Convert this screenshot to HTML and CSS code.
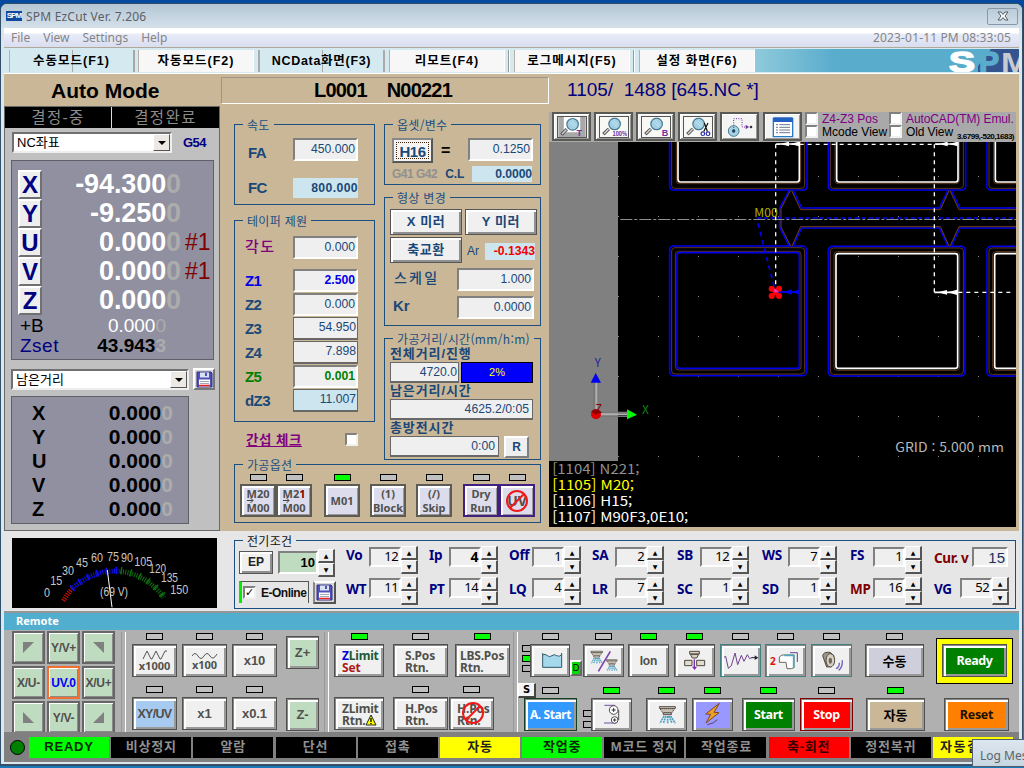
FILE: index.html
```html
<!DOCTYPE html>
<html lang="ko">
<head>
<meta charset="utf-8">
<title>SPM EzCut Ver. 7.206</title>
<link rel="stylesheet" href="styles.css">
</head>
<body>
<svg class="defs" width="0" height="0">
  <defs>
    <symbol id="floppy" viewBox="0 0 17 17"><path d="M1 1h14l1 1v14H1z" fill="#5050b8" stroke="#303080"/><path d="M4 1.5h9v5H4z" fill="#d8e4f4"/><path d="M9 2h2v3H9z" fill="#5050b8"/><path d="M3 8.500h11v7H3z" fill="#fff"/><path d="M4 10.500h9M4 12.500h9" stroke="#a0a8b8"/><path d="M3 14.500h11" stroke="#f02020" stroke-width="1.500"/></symbol>
    <symbol id="lens" viewBox="0 0 84 60"><path d="M6 56L24 38" stroke="#505050" stroke-width="11"/><path d="M8 54L23 39" stroke="#d0d0d0" stroke-width="5"/><circle cx="43" cy="22" r="19" fill="#a4d0e4" stroke="#487890" stroke-width="4"/><path d="M33 14l18 18M39 10l16 16" stroke="#c8e8f4" stroke-width="3"/></symbol>
    <symbol id="forbid" viewBox="0 0 24 24"><circle cx="12" cy="12" r="10" fill="none" stroke="#f01818" stroke-width="2"/><path d="M5 19L19 5" stroke="#f01818" stroke-width="2"/></symbol>
    <symbol id="spray" viewBox="0 0 52 54"><path d="M2 2h48v5H2z" fill="#e8e0d0" stroke="#504840" stroke-width="3"/><path d="M4 8h44l-8 12H12z" fill="#c8c0b0" stroke="#504840" stroke-width="3" stroke-dasharray="4 2"/><path d="M14 21h24v5H14z" fill="#fff" stroke="#504840" stroke-width="3"/><path d="M16 30L4 52M22 30l-8 22M27 30v22M31 30l9 22M36 30l14 22" stroke="#50a0c0" stroke-width="5" stroke-dasharray="6 2"/></symbol>
  </defs>
</svg>
<div class="desktop">
<div class="window">
  <header class="titlebar">
    <span class="appicon">SPM</span><span class="title">SPM EzCut Ver. 7.206</span>
    <span class="close"><svg width="12" height="10" viewBox="0 0 12 10"><path d="M1 1h3l2 2.500L8 1h3L8 5l3 4H8L6 6.500 4 9H1l3-4z" fill="#fff" stroke="#505866"/></svg></span>
  </header>
  <nav class="menubar"><span>File</span><span>View</span><span>Settings</span><span>Help</span><time>2023-01-11 PM 08:33:05</time></nav>
  <nav class="tabs">
    <span class="tab cyan t1">수동모드(F1)</span><span class="tab">자동모드(F2)</span><span class="tab cyan t3">NCData화면(F3)</span><span class="tab">리모트(F4)</span><span class="sep"></span><span class="tab">로그메시지(F5)</span><span class="sep"></span><span class="tab">설정 화면(F6)</span>
    <span class="brand"><svg width="70" height="25" viewBox="0 0 70 25"><path d="M42 0h28v25H29V17z" fill="#34548f"/><text x="0" y="23" class="logo" textLength="26" lengthAdjust="spacingAndGlyphs" fill="#fff" stroke="#fff">S</text><text x="30" y="23" class="logo" textLength="20" lengthAdjust="spacingAndGlyphs" fill="#5aaccd" stroke="#5aaccd">P</text><text x="52" y="24" class="logo thin" textLength="28" lengthAdjust="spacingAndGlyphs" fill="#c8ccd2">M</text></svg></span>
  </nav>

  <main class="main">
    <section class="left">
      <h1>Auto Mode</h1>
      <div class="axes">
        <div class="decide"><span>결정-중</span><span>결정완료</span></div>
        <div class="selrow"><span class="select s1">NC좌표<i></i></span><b class="g54">G54</b></div>
        <div class="coords">
          <div class="axis"><b class="axbtn">X</b><b class="num">-94.300<i>0</i></b></div>
          <div class="axis"><b class="axbtn">Y</b><b class="num">-9.250<i>0</i></b></div>
          <div class="axis"><b class="axbtn">U</b><b class="num">0.000<i>0</i></b><em>#1</em></div>
          <div class="axis"><b class="axbtn">V</b><b class="num">0.000<i>0</i></b><em>#1</em></div>
          <div class="axis"><b class="axbtn">Z</b><b class="num">0.000<i>0</i></b></div>
          <div class="minor"><span>+B</span><span class="num2 white">0.000<i>0</i></span></div>
          <div class="minor zs"><span>Zset</span><b class="num2">43.943<i>3</i></b></div>
        </div>
        <div class="selrow two"><span class="select s2">남은거리<i></i></span><span class="save"><svg width="17" height="17"><use href="#floppy"/></svg></span></div>
        <div class="remain">
          <div><b>X</b><b class="rv">0.000<i>0</i></b></div>
          <div><b>Y</b><b class="rv">0.000<i>0</i></b></div>
          <div><b>U</b><b class="rv">0.000<i>0</i></b></div>
          <div><b>V</b><b class="rv">0.000<i>0</i></b></div>
          <div><b>Z</b><b class="rv">0.000<i>0</i></b></div>
        </div>
      </div>
    </section>

    <section class="middle">
      <div class="prog"><b>L0001</b><b>N00221</b></div>
      <div class="cols">
        <div class="colA">
          <div class="group speed"><span class="cap">속도</span>
            <div class="fr fa"><b>FA</b><span class="in">450.000</span></div>
            <div class="fr fc"><b>FC</b><span class="in ro">800.000</span></div>
          </div>
          <div class="group taper"><span class="cap">테이퍼 제원</span>
            <div class="fr ang"><b class="kr purple">각도</b><span class="in">0.000</span></div>
            <div class="fr"><b class="blue">Z1</b><span class="in blue bold">2.500</span></div>
            <div class="fr"><b>Z2</b><span class="in">0.000</span></div>
            <div class="fr"><b>Z3</b><span class="in flat">54.950</span></div>
            <div class="fr"><b>Z4</b><span class="in flat">7.898</span></div>
            <div class="fr"><b class="green">Z5</b><span class="in green bold">0.001</span></div>
            <div class="fr"><b>dZ3</b><span class="in flat cy">11.007</span></div>
          </div>
          <div class="interf"><b>간섭 체크</b><i class="chk"></i></div>
        </div>
        <div class="colB">
          <div class="group offset"><span class="cap">옵셋/변수</span>
            <div class="orow"><span class="h16"><b>H16</b></span><b class="eq">=</b><span class="in">0.1250</span></div>
            <div class="orow2"><b class="grey">G41 G42</b><b>C.L</b><span class="in ro">0.0000</span></div>
          </div>
          <div class="group shape"><span class="cap">형상 변경</span>
            <div class="sr"><span class="btn">X 미러</span><span class="btn">Y 미러</span></div>
            <div class="sr"><span class="btn">축교환</span><span class="ar">Ar</span><span class="in ro red">-0.1343</span></div>
            <div class="sr2"><b class="kr">스케일</b><span class="in">1.000</span></div>
            <div class="sr2 kr2"><b>Kr</b><span class="in">0.0000</span></div>
          </div>
          <div class="group dist"><span class="cap">가공거리/시간(mm/h:m)</span>
            <b class="dl">전체거리/진행</b>
            <div class="dr"><span class="in flat w69">4720.0</span><span class="pct">2%</span></div>
            <b class="dl">남은거리/시간</b>
            <div class="dr"><span class="in flat w143">4625.2/0:05</span></div>
            <b class="dl">총방전시간</b>
            <div class="dr"><span class="in flat w109">0:00</span><span class="rbtn">R</span></div>
          </div>
        </div>
      </div>
      <div class="group opts"><span class="cap">가공옵션</span>
        <div class="op"><i class="led"></i><div class="ob"><p>M20</p><svg class="arr" width="7" height="5"><path d="M0 2.500h6M3.500 0L6 2.500 3.500 5" fill="none" stroke="#444"/></svg><p>M00</p></div></div>
        <div class="op"><i class="led"></i><div class="ob"><p>M2<em>1</em></p><svg class="arr" width="7" height="5"><path d="M0 2.500h6M3.500 0L6 2.500 3.500 5" fill="none" stroke="#444"/></svg><p>M00</p></div></div>
        <div class="op g12"><i class="led on"></i><div class="ob"><p>M01</p></div></div>
        <div class="op g10"><i class="led"></i><div class="ob"><p>(1)</p><p>Block</p></div></div>
        <div class="op g10"><i class="led"></i><div class="ob"><p>(/)</p><p>Skip</p></div></div>
        <div class="op g11 violet"><i class="led"></i><div class="ob"><p>Dry</p><p>Run</p></div></div>
        <div class="op violet"><i class="led"></i><div class="ob"><p class="uv">UV</p><svg class="ban" width="24" height="24"><use href="#forbid"/></svg></div></div>
      </div>
    </section>

    <section class="right">
      <div class="ncline">1105/&nbsp; 1488 [645.NC *]</div>
      <div class="tools">
        <span class="tool"><svg width="30" height="22" viewBox="0 0 90 66"><path d="M0 0h90v66H0z" fill="#a8a8a8"/><path d="M18 0h54v50H18z" fill="#fff"/><use href="#lens" x="4" y="2" width="84" height="60"/><text x="60" y="63" class="tl">T</text></svg></span>
        <span class="tool"><svg width="30" height="22" viewBox="0 0 90 66"><use href="#lens" x="4" y="1" width="84" height="60"/><text x="40" y="64" class="tl sm" textLength="48" lengthAdjust="spacingAndGlyphs">100%</text></svg></span>
        <span class="tool"><svg width="30" height="22" viewBox="0 0 90 66"><use href="#lens" x="4" y="1" width="84" height="60"/><text x="64" y="64" class="tl">B</text></svg></span>
        <span class="tool"><svg width="30" height="22" viewBox="0 0 90 66"><use href="#lens" x="4" y="1" width="84" height="60"/><path d="M66 20l10 28M78 20L64 48" stroke="#111" stroke-width="4"/><g fill="none" stroke="#3030b0" stroke-width="4"><circle cx="61" cy="55" r="6"/><circle cx="78" cy="55" r="6"/></g></svg></span>
        <span class="tool plain"><svg width="30" height="24" viewBox="0 0 90 72"><circle cx="26" cy="48" r="16" fill="#a4d4e4" stroke="#487890" stroke-width="3"/><circle cx="26" cy="48" r="5" fill="#204060"/><path d="M26 46V11H51V36H64" fill="none" stroke="#7030a0" stroke-width="3" stroke-dasharray="3 4"/><path d="M62 29l10 7-10 7z" fill="#7030a0"/><circle cx="78" cy="36" r="4" fill="#333"/></svg></span>
        <span class="tool plain"><svg width="22" height="22" viewBox="0 0 66 66"><path d="M4 8h58v54H4z" fill="#fff" stroke="#2878c8" stroke-width="4"/><path d="M4 4h58v14H4z" fill="#2060c0"/><path d="M12 26h6M12 34h6M12 42h6M12 50h6M22 26h32M22 34h32M22 42h32M22 50h32" stroke="#6a7a90" stroke-width="3"/></svg></span>
        <div class="checks"><label><i class="chk"></i>Z4-Z3 Pos</label><label class="k"><i class="chk"></i>Mcode View</label></div>
        <div class="checks c2"><label><i class="chk"></i>AutoCAD(TM) Emul.</label><label class="k"><i class="chk"></i>Old View<small>3.6799,-520,1683)</small></label></div>
      </div>
      <svg class="cad" width="467" height="385" viewBox="12 6 1401 1155">
        <defs>
          <pattern id="dots" x="219" y="108" width="120" height="120" patternUnits="userSpaceOnUse"><path d="M0 0h3v3H0z" fill="#8a8a8a"/></pattern>
          <g id="lower"><rect x="374" y="318" width="410" height="389" rx="12" fill="none" stroke="#0000f0" stroke-width="5"/><rect x="380" y="323" width="399" height="379" rx="10" fill="none" stroke="#603818" stroke-width="3"/><rect x="391" y="334" width="377" height="356" rx="10" fill="none" stroke="#603818" stroke-width="3"/></g>
          <g id="upper" fill="none"><path d="M374 0V138q0 12 12 12H774q12 0 12-12V0" stroke="#0000f0" stroke-width="5"/><path d="M380 0V136q0 9 9 9H770q9 0 9-9V0M394 0V122q0 9 9 9H757q10 0 10-9V0" stroke="#603818" stroke-width="3"/><path d="M399 0V118q0 8 7 8H756q7 0 7-8V0" stroke="#fff" stroke-width="5"/></g>
        </defs>
        <path d="M12 6h1401v1155H12z" fill="#000"/><path d="M219 100h1194v860H219z" fill="url(#dots)"/><path d="M12 6h207v957H12z" fill="#808080"/>
        <use href="#upper"/><use href="#upper" x="476"/><use href="#upper" x="952"/>
        <use href="#lower"/><use href="#lower" x="476" y="1"/><use href="#lower" x="952" y="1"/>
        <rect x="396" y="338" width="367" height="347" rx="8" fill="none" stroke="#0000f0" stroke-width="5"/>
        <g fill="none" stroke="#fff" stroke-width="5"><rect x="873" y="341" width="365" height="344" rx="7"/><rect x="1349" y="341" width="365" height="344" rx="7"/></g>
        <path d="M732 152L704 205V262L733 318M744 152L770 204H1183L1209 152M1219 152L1245 204H1413M744 318L770 264H1183L1209 318M1219 318L1245 264H1413" fill="none" stroke="#0000f0" stroke-width="5"/>
        <path d="M736 152L708 206V261L737 318M740 152L767 209H1186L1212 152M1215 152L1242 209H1413M741 318L767 260H1186L1212 318M1215 318L1242 260H1413" fill="none" stroke="#704018" stroke-width="3"/>
        <path d="M226 238.500H1413" stroke="#909090" stroke-width="3" stroke-dasharray="36 6 9 6"/>
        <path d="M635 234H1413" stroke="#0000f0" stroke-width="4" stroke-dasharray="13 8"/>
        <path d="M639 250L688 443" stroke="#0000f0" stroke-width="5" stroke-dasharray="14 12"/>
        <path d="M692 13V445M692 13H1240M1168 13V457M1240 457H1405" fill="none" stroke="#fff" stroke-width="4" stroke-dasharray="12 12"/>
        <path d="M694 12H762M1170 12H1238M1168 457H1238" stroke="#fff" stroke-width="5"/>
        <path d="M706 12l26-7v14zM736 12l26-7v14zM1182 12l26-7v14zM1212 12l26-7v14zM1178 457l28-7v14zM1208 457l28-8v16z" fill="#fff"/>
        <path d="M694 456H764" stroke="#0000f0" stroke-width="5"/><path d="M716 456l24-8v16zM742 456l22-8v16z" fill="#0000f0"/>
        <text x="628" y="232" font-size="34" fill="#b4b400" textLength="70" lengthAdjust="spacingAndGlyphs">M00</text>
        <path d="M682 448l18 18M700 448l-18 18" stroke="#f00" stroke-width="10"/><g fill="#f00"><circle cx="680" cy="446" r="9"/><circle cx="702" cy="446" r="9"/><circle cx="680" cy="468" r="9"/><circle cx="702" cy="468" r="9"/></g><path d="M688 444l14 13h-14z" fill="#f030e0"/>
        <path d="M152 728V820" stroke="#777" stroke-width="15"/><path d="M154 728V820M165 823H246" stroke="#b0b0b0" stroke-width="6"/><path d="M165 829H246" stroke="#777" stroke-width="4"/><path d="M165 817H246" stroke="#777" stroke-width="4"/>
        <path d="M137 728h31l-16-29z" fill="#0000f0"/><path d="M246 808v30l30-14z" fill="#0f0"/><circle cx="153" cy="823" r="15" fill="#e00000"/><path d="M138 815q15-14 30 0l-15 9z" fill="#900000"/>
        <text x="149" y="681" font-size="34" fill="#2020a0">Y</text><text x="151" y="820" font-size="34" fill="#800000">Z</text><text x="291" y="823" font-size="36" fill="#108010">X</text>
        <text x="1051" y="935" font-size="38" fill="#b8b8b8" textLength="326" lengthAdjust="spacingAndGlyphs">GRID : 5.000 mm</text>
        <g font-size="41" fill="#fff"><text x="22" y="1001" fill="#909090" textLength="261" lengthAdjust="spacingAndGlyphs">[1104] N221;</text><text x="22" y="1049" fill="#ff0" textLength="245" lengthAdjust="spacingAndGlyphs">[1105] M20;</text><text x="22" y="1097" textLength="240" lengthAdjust="spacingAndGlyphs">[1106] H15;</text><text x="22" y="1145" textLength="408" lengthAdjust="spacingAndGlyphs">[1107] M90F3,0E10;</text></g>
      </svg>
    </section>
  </main>

  <section class="elec">
    <svg class="gauge" width="205" height="70" viewBox="36 24 615 210">
      <path d="M36 24h615v210H36z" fill="#000"/>
      <g fill="none" stroke-width="15"><path d="M190 212A184 184 0 0 1 216 177" stroke="#e01010" stroke-dasharray="3 4"/><path d="M216 177A184 184 0 0 1 362 124" stroke="#1010f0" stroke-dasharray="3 4"/><path d="M362 124A184 184 0 0 1 491 203" stroke="#107010" stroke-dasharray="3 4"/></g>
      <g fill="none" stroke-width="22"><path d="M216 176A186 186 0 0 1 362 122" stroke="#1010f0" stroke-dasharray="4 25"/><path d="M362 122A186 186 0 0 1 491 200" stroke="#107010" stroke-dasharray="4 25"/></g>
      <path d="M322 120L336 232" stroke="#fff" stroke-width="3"/>
      <g fill="#c8c8c8" font-size="38"><text x="132" y="201" textLength="18" lengthAdjust="spacingAndGlyphs">0</text><text x="151" y="166" textLength="36" lengthAdjust="spacingAndGlyphs">15</text><text x="186" y="136" textLength="36" lengthAdjust="spacingAndGlyphs">30</text><text x="228" y="111" textLength="36" lengthAdjust="spacingAndGlyphs">45</text><text x="273" y="97" textLength="36" lengthAdjust="spacingAndGlyphs">60</text><text x="321" y="94" textLength="36" lengthAdjust="spacingAndGlyphs">75</text><text x="363" y="97" textLength="36" lengthAdjust="spacingAndGlyphs">90</text><text x="403" y="109" textLength="54" lengthAdjust="spacingAndGlyphs">105</text><text x="448" y="129" textLength="50" lengthAdjust="spacingAndGlyphs">120</text><text x="483" y="156" textLength="51" lengthAdjust="spacingAndGlyphs">135</text><text x="511" y="193" textLength="54" lengthAdjust="spacingAndGlyphs">150</text><text x="300" y="199" textLength="84" lengthAdjust="spacingAndGlyphs">(69 V)</text></g>
    </svg>
    <div class="group egroup"><span class="cap blk">전기조건</span>
      <div class="ep">
        <div class="er"><span class="btn epb">EP</span><span class="in ten">10</span><span class="spin"></span></div>
        <div class="er r2"><span class="online"><i class="chk on">✓</i>E-Online</span><span class="save dk"><svg width="17" height="17"><use href="#floppy"/></svg></span></div>
      </div>
      <div class="params">
        <div class="prow"><p><b>Vo</b><span>12</span><i class="spin"></i></p><p><b>Ip</b><span class="bold">4</span><i class="spin"></i></p><p><b>Off</b><span>1</span><i class="spin"></i></p><p><b>SA</b><span>2</span><i class="spin"></i></p><p><b>SB</b><span>12</span><i class="spin"></i></p><p><b>WS</b><span>7</span><i class="spin"></i></p><p><b>FS</b><span>1</span><i class="spin"></i></p><p class="cur"><b class="dred">Cur. v</b><span>15</span></p></div>
        <div class="prow"><p><b>WT</b><span>11</span><i class="spin"></i></p><p><b>PT</b><span>14</span><i class="spin"></i></p><p><b>LQ</b><span>4</span><i class="spin"></i></p><p><b>LR</b><span>7</span><i class="spin"></i></p><p><b>SC</b><span>1</span><i class="spin"></i></p><p><b>SD</b><span>1</span><i class="spin"></i></p><p><b class="dred">MP</b><span>16</span><i class="spin"></i></p><p><b>VG</b><span>52</span><i class="spin"></i></p></div>
      </div>
    </div>
  </section>

  <div class="remhead">Remote</div>
  <section class="remote">
    <div class="jog">
      <span><svg width="11" height="11"><path d="M0 0h11L0 11z"/></svg></span><span>Y/V+</span><span><svg width="11" height="11"><path d="M0 0h11v11z"/></svg></span>
      <span>X/U-</span><span class="uv0">UV.0</span><span>X/U+</span>
      <span><svg width="11" height="11"><path d="M0 0v11h11z"/></svg></span><span>Y/V-</span><span><svg width="11" height="11"><path d="M11 0v11H0z"/></svg></span>
    </div>
    <i class="groove"></i>
    <div class="feed">
      <div class="ctl"><i class="led"></i><span class="k"><svg width="26" height="10" viewBox="0 0 26 10"><path d="M1 9l4-8 4 8h1l4-8 4 8h1l4-8h2" fill="none" stroke="#555"/></svg>x1000</span></div>
      <div class="ctl"><i class="led"></i><span class="k"><svg width="26" height="8" viewBox="0 0 26 8"><path d="M0 5q3-5 6 0t6 0t6 0t7-2" fill="none" stroke="#555"/></svg>x100</span></div>
      <div class="ctl"><i class="led"></i><span class="k big">x10</span></div>
      <div class="ctl"><i class="led"></i><span class="k big sky">XY/UV</span></div>
      <div class="ctl"><i class="led"></i><span class="k big">x1</span></div>
      <div class="ctl"><i class="led"></i><span class="k big">x0.1</span></div>
    </div>
    <div class="zcol"><span class="k big mint">Z+</span><span class="k big mint">Z-</span></div>
    <i class="groove g2"></i>
    <div class="returns">
      <div class="rrow"><div class="ctl w50"><i class="led on"></i><span class="k tx"><em class="bl">Z</em><em class="gr">Limit</em><br><em class="rd">Set</em></span></div><div class="ctl w55"><i class="led"></i><span class="k tx">S.Pos<br>Rtn.</span></div><div class="ctl w55 ml7"><i class="led on"></i><span class="k tx lbs">LBS.Pos<br>Rtn.</span></div></div>
      <div class="rrow"><div class="ctl w50"><i class="led hid"></i><span class="k tx">ZLimit<br>Rtn.<svg class="warn" width="12" height="12" viewBox="0 0 12 12"><path d="M6 1l5 10H1z" fill="#ff0" stroke="#222"/><path d="M6 4v4M6 9v1" stroke="#000" stroke-width="1.300"/></svg></span></div><div class="ctl w55"><i class="led"></i><span class="k tx">H.Pos<br>Rtn.</span></div><div class="ctl w45 ml1"><i class="led"></i><span class="k tx h2">H.Pos<br>Rtn.<svg class="ban" width="24" height="24"><use href="#forbid"/></svg></span></div></div>
    </div>
    <i class="groove g3"></i>
    <div class="ops">
      <div class="orow1">
        <div class="minis"><i></i><i class="on"></i><i></i></div>
        <div class="ctl"><i class="led"></i><span class="k"><svg class="ic" viewBox="600 348 117 87"><path d="M635 378q7-7 14 0q7 6 14 0q7-6 14 0q8 5 15-1V412H635z" fill="#a4d8ec"/><path d="M635 369V412H692V369M635 375q7-5 14 2q7 6 14 0q7-6 14 0q8 5 15-3" fill="none" stroke="#305868" stroke-width="3"/></svg></span></div>
        <span class="dbadge">D</span>
        <div class="ctl"><i class="led"></i><span class="k"><svg class="ic" viewBox="765 348 117 87"><use href="#spray" x="784" y="358" width="38" height="48"/><use href="#spray" x="831" y="384" width="35" height="44"/><path d="M808 424L844 364" stroke="#8040b0" stroke-width="5"/></svg></span></div>
        <div class="ctl"><i class="led on"></i><span class="k big ion">Ion</span></div>
        <div class="ctl"><i class="led on"></i><span class="k"><svg class="ic" viewBox="18 348 117 87"><path d="M47 391h22v16H47zM83 391h24v16H83z" fill="#e0dcd0" stroke="#504840" stroke-width="3"/><path d="M62 364h29v8H62zM64 373h25l-6 11H70z" fill="#d8d0c0" stroke="#504840" stroke-width="3"/><path d="M76 388v25" stroke="#8030b0" stroke-width="4"/><path d="M69 410h15l-7 10z" fill="#8030b0"/></svg></span></div>
        <div class="ctl teal"><i class="led"></i><span class="k"><svg class="ic" viewBox="156 348 117 87"><path d="M165 382l5-3 8 36 9-8 11-38 8 35 11-28 8 18 10-20 7 12 8-4" fill="none" stroke="#704090" stroke-width="3"/><path d="M248 383h14" stroke="#202030" stroke-width="3"/><path d="M257 376l11 7-11 7z" fill="#202030"/></svg></span></div>
        <div class="ctl teal"><i class="led"></i><span class="k"><svg class="ic" viewBox="291 348 117 87"><text x="303" y="405" font-size="30" font-weight="bold" fill="#e01010">2</text><path d="M331 381l8-6h36v38l-8 3h-13l-3-19h-20z" fill="#fff" stroke="#706860" stroke-width="3"/><path d="M346 376h28v38" fill="none" stroke="#50a8b8" stroke-width="5"/><path d="M363 368h22v28" fill="none" stroke="#6040a0" stroke-width="3"/></svg></span></div>
        <div class="ctl teal"><i class="led"></i><span class="k"><svg class="ic" viewBox="429 348 117 87"><path d="M461 377q2-12 22-10l12 10-8 33-14 1z" fill="#a09888" stroke="#504840" stroke-width="3"/><ellipse cx="484" cy="391" rx="13" ry="20" fill="#d8d0c0" stroke="#504840" stroke-width="3"/><ellipse cx="484" cy="392" rx="5" ry="9" fill="#706858"/><path d="M501 416q10-4 10-18M509 421q12-8 11-30" fill="none" stroke="#7060b8" stroke-width="4"/></svg></span></div>
        <div class="ctl w59"><i class="led"></i><span class="k krb">수동</span></div>
        <div class="readybox"><span class="k go">Ready</span></div>
      </div>
      <div class="orow3">
        <span class="sbadge">S</span>
        <div class="ctl w53 dg"><i class="led"></i><span class="k start">A. Start</span></div>
        <div class="minis m2"><i></i><i></i></div>
        <div class="ctl"><i class="led on"></i><span class="k"><svg class="ic" viewBox="786 511 117 87"><path d="M823 527h32M822 580h36" stroke="#7050a0" stroke-width="3"/><g fill="#fff" stroke="#505050" stroke-width="3"><circle cx="851" cy="541" r="13"/><circle cx="854" cy="571" r="10"/></g><path d="M866 541v30" stroke="#505050" stroke-width="3"/><path d="M845 541h12M851 535v12M849 571h10M854 566v10" stroke="#333" stroke-width="3"/></svg></span></div>
        <div class="ctl sp"><i class="led on"></i><span class="k"><svg class="ic" viewBox="951 511 117 87"><use href="#spray" x="986" y="529" width="52" height="54"/></svg></span></div>
        <div class="ctl lt"><i class="led on"></i><span class="k"><svg class="ic" viewBox="69 511 117 87"><path d="M148 521l-41 32 15 1-14 26 39-31-15-1z" fill="#f0a020" stroke="#804820" stroke-width="3"/><path d="M112 585q20-3 30-15" fill="none" stroke="#604070" stroke-width="3"/></svg></span></div>
        <div class="ctl w53 st"><i class="led on"></i><span class="k go">Start</span></div>
        <div class="ctl w53 sp2"><i class="led"></i><span class="k stop">Stop</span></div>
        <div class="ctl w59"><i class="led on"></i><span class="k krb tan">자동</span></div>
        <div class="ctl w65"><i class="led hid"></i><span class="k reset">Reset</span></div>
      </div>
    </div>
  </section>
  <footer class="status"><i class="lamp"></i><span class="on">READY</span><span>비상정지</span><span>알람</span><span>단선</span><span>접촉</span><span class="yl">자동</span><span class="on">작업중</span><span>M코드 정지</span><span>작업종료</span><span class="rd">축-회전</span><span>정전복귀</span><span class="yl last">자동결선</span></footer>
</div>
<div class="logmes">Log Mes</div>
</div>
</body>
</html>
```
FILE: styles.css
```css
* { box-sizing: border-box; }
body { margin: 0; font: 12px "Liberation Sans", "Noto Sans CJK KR", sans-serif; white-space: nowrap; overflow: hidden; }
i, em { font-style: normal; }
h1 { margin: 0; }
.defs { position: absolute; }
.desktop { position: relative; width: 1024px; height: 768px; padding: 4px 2px 0 1px; overflow: hidden; background: linear-gradient(#0449a0, #0868b8 35%, #18a8e0 75%, #1878b8); }
.window { width: 1021px; height: 761px; padding: 0 3px; border-radius: 6px 6px 0 0; background: #dbe6ee; border-bottom: 1px solid #405060; box-shadow: 0 0 0 1px #30506a; overflow: hidden; }

/* title, menu and tab bars */
.titlebar { height: 24px; margin: 0 -3px; padding: 0 4px 0 5px; display: flex; align-items: center; background: linear-gradient(#b4c6d4, #d4e1eb); font-family: "Noto Sans", sans-serif; color: #5c6066; }
.appicon { width: 16px; height: 10px; background: #1048a0; color: #fff; font: bold 8px/10px "Liberation Sans", sans-serif; letter-spacing: -.9px; text-align: center; }
.title { margin-left: 4px; font-size: 12px; letter-spacing: .2px; }
.close { margin-left: auto; width: 31px; height: 17px; border: 1px solid #8898a8; border-radius: 2px; display: flex; justify-content: center; align-items: center; }
.menubar { height: 19px; padding: 0 8px 0 7px; display: flex; align-items: center; gap: 13px; background: linear-gradient(#fff 0 5px, #e9ecf8 6px, #d8ddf0); color: #858585; font: 12px "Noto Sans", sans-serif; }
.menubar time { margin-left: auto; letter-spacing: .15px; }
.tabs { height: 27px; padding: 2px 0 1px 5px; display: flex; background: #d4e9f0; border-top: 1px solid #b0a898; border-bottom: 1px solid #fff; font: bold 12.5px/23px "Liberation Sans", "Noto Sans CJK KR", sans-serif; }
.tab { flex: none; width: 116px; text-align: center; background: #f7f7f7; border-left: 1px solid #b8b0a8; border-right: 1px solid #fff; letter-spacing: 1px; }
.tab.cyan { background: #d0e7ef; }
.tab.t1 { width: 126px; margin-right: 3px; border-right: 2px solid #a8a8a8; background: linear-gradient(90deg, transparent 62px, #aaa 62px 63px, transparent 63px); }
.tab.t3 { width: 127px; margin: 0 4px; border-left: 2px solid #aaa; border-right: 2px solid #aaa; letter-spacing: .7px; background: linear-gradient(90deg, transparent 62px, #aaa 62px 63px, transparent 63px); }
.sep { width: 2px; margin: 0 4px 0 3px; border-left: 1px solid #999; border-right: 1px solid #fff; }
.brand { flex: 1; margin-top: -1px; display: flex; justify-content: flex-end; background: linear-gradient(90deg, #8fcadb, #5aaccd 30%); overflow: hidden; }
.logo { font: bold 29px "Liberation Sans", sans-serif; stroke-width: 1.5px; }
.logo.thin { stroke-width: 0; }

.main { height: 457px; display: grid; grid-template-columns: 216px 329px 471px; background: #cab798; }

/* axis column */
.left h1 { height: 32px; font-size: 21px; line-height: 33px; padding-left: 47px; }
.axes { height: 425px; background: #c0c0c0; border: 1px solid #686868; }
.decide { display: grid; grid-template-columns: 106px 107px; gap: 1px; height: 21px; background: #ddd; font-size: 15.5px; line-height: 21px; color: #8c8c8c; text-align: center; letter-spacing: 1.4px; }
.decide span { background: #000; }
.selrow { display: flex; align-items: center; padding: 4px 0 0 7px; }
.select { position: relative; height: 21px; padding-left: 3px; background: #fff; border: 2px solid; border-color: #707070 #eee #eee #707070; font-size: 13px; line-height: 17px; }
.s1 { width: 160px; }
.s2 { width: 178px; }
.select i { position: absolute; right: 0; top: 0; width: 17px; height: 17px; background: #ece9e4; border: 1px solid; border-color: #fff #555 #555 #fff; }
.select i::after { content: ""; position: absolute; left: 4px; top: 6px; border: 4px solid transparent; border-top-color: #000; border-bottom: 0; }
.g54 { margin-left: 11px; color: #000080; font-size: 13px; letter-spacing: -.5px; }
.coords { margin: 7px 0 0 6px; width: 203px; height: 200px; padding: 9px 0 0 6px; background: #9090a0; border: 1px solid #606068; }
.coords i, .remain i { color: #acacac; }
.axis { height: 29px; display: flex; align-items: center; }
.axbtn { width: 24px; height: 29px; background: #eee; border: 2px solid; border-color: #fff #707070 #707070 #fff; color: #000080; font-size: 24px; line-height: 26px; text-align: center; }
.num { width: 139px; text-align: right; color: #fff; font-size: 27px; line-height: 29px; letter-spacing: -.1px; }
.axis em { margin-left: 4px; color: #800000; font-size: 23px; }
.minor { display: flex; height: 21px; font-size: 19px; line-height: 22px; padding-left: 2px; }
.minor > :first-child { width: 48px; }
.minor.zs { line-height: 20px; }
.minor > .num2 { width: 98px; text-align: right; }
.zs > span { color: #000080; letter-spacing: .5px; }
.white { color: #fff; }
.selrow.two { padding: 8px 0 0 6px; }
.save { width: 22px; height: 22px; margin-left: 4px; display: flex; justify-content: center; align-items: center; background: #d8d8d8; border: 2px solid; border-color: #fff #777 #777 #fff; }
.save.dk { border-color: #fff #555 #555 #888; }
.remain { margin: 6px 0 0 6px; width: 178px; height: 128px; padding-top: 4px; background: #9090a0; border: 1px solid #606068; font-size: 21px; line-height: 24px; }
.remain div { display: flex; padding-left: 20px; }
.remain div > :first-child { width: 29px; font-size: 20px; }
.rv { width: 112px; text-align: right; }

/* groups and fields */
.group { position: relative; border: 1px solid #1a4f80; color: #1a4878; }
.cap { position: absolute; left: 8px; top: -9px; padding: 0 4px; background: #cab798; color: #1a4f80; font: 12px/17px "Noto Sans CJK KR", sans-serif; letter-spacing: .3px; }
.in { width: 65px; height: 23px; padding-right: 1px; background: #efefef; border: 2px solid; border-color: #808080 #fff #fff #808080; text-align: right; font-size: 12.2px; line-height: 18px; color: #1a4878; font-weight: normal; }
.in.flat { border: 2px solid #686868; border-width: 1px 1px 2px; }
.in.ro { height: 20px; border: 0; background: #cde5ee; font-weight: bold; line-height: 20px; padding-right: 0; }
.in.cy { background: #cde5ee; }
.blue, .in.blue { color: #0000e8; }
.green, .in.green { color: #008000; }
.purple { color: #800080; }
.red, .in.red { color: #f00000; }
.bold, .in.bold { font-weight: bold; }
.grey { color: #909090; }
.middle .prog { width: 328px; height: 27px; margin: 3px 0 0 1px; padding-left: 92px; border: 1px solid; border-color: #a09488 #fff #fff #a09488; display: flex; gap: 20px; font-size: 20px; line-height: 24px; letter-spacing: -.8px; }
.cols { display: flex; gap: 9px; padding: 20px 0 0 14px; height: 360px; }
.colA { width: 141px; }
.colB { width: 157px; }
.fr { display: grid; grid-template-columns: 48px 65px; padding-left: 10px; margin-bottom: 1px; height: 23px; align-items: center; }
.fr > b { font-size: 15px; letter-spacing: -.6px; }
.speed { height: 81px; padding-top: 13px; }
.speed .fr > b { padding-left: 3px; }
.fa { margin-bottom: 15px; }
.fa > b { padding-top: 5px; }
.fc > .in { letter-spacing: .4px; }
.taper { height: 202px; margin-top: 15px; padding-top: 15px; }
.fr.ang { margin-bottom: 10px; }
.fr > b.kr { font-size: 15px; font-weight: 500; margin-top: -5px; letter-spacing: 1.5px; padding-left: 0; }
.interf { display: flex; justify-content: space-between; align-items: center; padding: 7px 17px 0 12px; font-size: 13.5px; color: #800080; text-decoration: underline; letter-spacing: .5px; }
.chk { display: inline-block; flex: none; width: 13px; height: 13px; background: #fff; border: 2px solid; border-color: #808080 #f0f0f0 #f0f0f0 #808080; }
.offset { height: 61px; padding: 13px 0 0 7px; }
.orow { display: flex; height: 25px; }
.h16 { width: 41px; height: 25px; padding: 2px; background: #f4f4f4; border: 2px solid #565656; border-top-color: #888; border-left-color: #888; font-size: 15px; line-height: 16px; text-align: center; letter-spacing: -.5px; }
.h16 b { display: block; height: 17px; border: 1px dotted #402000; line-height: 17px; }
.eq { width: 35px; padding-left: 8px; font-size: 16px; line-height: 26px; color: #000; }
.orow2 { display: flex; gap: 8px; height: 16px; margin-top: 3px; font-size: 12px; line-height: 16px; letter-spacing: -.1px; }
.orow2 .in.ro { height: 16px; line-height: 16px; margin-left: auto; margin-right: 8px; }
.orow2 .grey { width: 47px; letter-spacing: -.5px; font-size: 12px; }
.shape { height: 129px; margin-top: 12px; padding: 11px 0 0 5px; }
.sr { display: flex; gap: 3px; height: 28px; }
.btn { width: 72px; height: 26px; background: #f0f0f0; border: 1px solid #565656; box-shadow: inset 1px 1px #fff, inset 2px 2px #fff, inset -2px -2px #909090; font-weight: bold; font-size: 13px; line-height: 24px; text-align: center; letter-spacing: .6px; }
.ar { width: 17px; padding-left: 2px; line-height: 29px; }
.in.ro.red { width: 50px; height: 17px; line-height: 17px; margin-top: 6px; }
.sr2 { display: flex; justify-content: space-between; padding: 3px 6px 0 3px; height: 27px; }
.sr2 .in { width: 77px; height: 23px; padding-right: 1px; }
.sr2 b { font-size: 15px; line-height: 20px; }
.sr2 b.kr { font-size: 14px; font-weight: 500; letter-spacing: 2.2px; padding-left: 1px; }
.sr2.kr2 { padding-top: 4px; }
.dist { height: 122px; margin-top: 12px; padding: 7px 0 0 5px; }
.dist .cap { letter-spacing: .35px; }
.dl { display: block; height: 16px; font-size: 13px; line-height: 16px; letter-spacing: .9px; }
.dr { display: flex; gap: 2px; height: 21px; }
.dr .in { height: 21px; line-height: 18px; padding-right: 3px; }
.dr .in.w69 { width: 69px; padding-right: 1px; }
.dr .w143 { width: 143px; }
.dr .w109 { width: 109px; }
.pct { width: 72px; height: 21px; border: 1px solid #000; background: #0000fa; color: #ff0; text-align: center; line-height: 19px; font-size: 11px; }
.rbtn { width: 25px; height: 22px; margin-left: 3px; background: #eee; border: 2px solid; border-color: #fff #808080 #808080 #fff; font-weight: bold; line-height: 18px; text-align: center; }
.opts { margin: 0 8px 0 14px; height: 59px; padding: 9px 0 0 5px; display: flex; }
.op { width: 36px; display: flex; flex-direction: column; align-items: center; gap: 3px; }
.g12 { margin-left: 12px; }
.g10 { margin-left: 10px; }
.g11 { margin-left: 11px; }
.led { width: 17px; height: 7px; flex: none; border: 1px solid #000; background: #c0c0c0; }
.led.on { background: #0f0; }
.led.hid { visibility: hidden; }
.ob { position: relative; width: 36px; height: 33px; background: #dcdcec; border: 2px solid #5c5c54; box-shadow: inset 2px 2px #fff, inset -1px -1px #999; color: #50504c; font: bold 11px/14px "Noto Sans", sans-serif; text-align: center; display: flex; flex-direction: column; justify-content: center; }
.ob p { margin: 0; }
.ob .uv { font-size: 14px; }
.arr { position: absolute; left: 5px; top: 12px; }
.op em { color: #800000; }
.violet .ob { border-color: #402080; }
.ban { position: absolute; left: 4px; top: 3px; }

/* program view */
.ncline { height: 38px; padding-left: 18px; font-size: 19px; line-height: 31px; color: #000080; }
.tools { display: flex; gap: 3px; width: 467px; height: 30px; padding-left: 3px; background: #a9a9a9; }
.tool { flex: none; width: 39px; height: 29px; display: grid; place-content: center; background: #f4f4f4; border: 2px solid #5a5a54; box-shadow: inset 1px 1px #fff, inset -1px -1px #999; }
.tool svg { display: block; border: 1px solid #555; background: #f8f8f4; }
.tool.plain svg { border: 0; background: none; }
.tool:nth-child(6) { margin-left: 1px; }
.tl { font: bold 30px "Liberation Sans", sans-serif; fill: #7030a0; }
.tl.sm { font-size: 23px; }
.checks { flex: none; width: 81px; display: flex; flex-direction: column; font-size: 12px; line-height: 14px; color: #800080; }
.checks label { height: 13px; display: flex; gap: 4px; }
.checks .k { color: #000; }
.c2 { width: 127px; letter-spacing: -.1px; }
.checks small { position: absolute; right: 2px; bottom: -3px; font: bold 8px/8px "Liberation Sans", sans-serif; letter-spacing: -.5px; }
.cad { display: block; font-family: "Noto Sans CJK KR", sans-serif; }

/* machining conditions */
.elec { height: 82px; padding: 7px 5px 0 8px; display: flex; gap: 17px; background: #e6e6e6; border-bottom: 2px solid #969696; }
.gauge { flex: none; }
.egroup { width: 782px; height: 69px; margin-top: 2px; display: flex; }
.cap.blk { background: #e6e6e6; color: #111; }
.ep { width: 111px; padding: 8px 0 0 4px; }
.er { display: flex; height: 32px; }
.epb { width: 34px; height: 23px; margin-top: 2px; line-height: 21px; font-size: 12px; color: #222; letter-spacing: 0; }
.in.ten { width: 40px; margin: 2px 0 0 5px; background: #c0dcc0; color: #000; font-weight: bold; font-size: 13px; line-height: 19px; }
.spin { width: 17px; height: 28px; display: grid; grid-template-rows: 14px 14px; }
.spin::before, .spin::after { content: "▲"; font: 6px/11px "DejaVu Sans", sans-serif; text-align: center; background: #eee; border: 1px solid; border-color: #fff #555 #555 #fff; border-width: 1px 2px 2px 1px; color: #000; }
.spin::after { content: "▼"; }
.online { width: 70px; height: 22px; display: flex; align-items: center; gap: 5px; padding-left: 1px; border: 1px solid #555; border-left: 3px solid #0e0; border-bottom: 0; color: #111; font-weight: bold; font-size: 12px; letter-spacing: -.5px; }
.chk.on { flex: none; font: bold 11px/9px "DejaVu Sans", sans-serif; color: #000; }
.save.dk { height: 23px; width: 23px; }
.params { padding-top: 5px; }
.prow { height: 31px; display: grid; grid-template-columns: 83px 80px 83px 85px 85px 88px 84px 82px; }
.prow p { margin: 0; padding-left: 1px; display: flex; }
.prow b { width: 23px; font: bold 13.5px/18px "Noto Sans", sans-serif; color: #000080; letter-spacing: -.3px; }
.prow + .prow b { line-height: 24px; }
.prow p:nth-child(2) b { width: 20px; }
.prow p:nth-child(6) b, .prow p:nth-child(8) b { width: 26px; }
.prow p span { width: 32px; height: 20px; margin-top: 1px; padding-right: 1px; border: 2px solid; border-color: #808080 #fff #fff #808080; background: #efefef; color: #000; font: 13px/15px "Noto Sans", sans-serif; text-align: right; letter-spacing: -.6px; }
.prow p span.bold { font-weight: bold; font-size: 14px; }
.prow b.dred { color: #800000; }
.prow p.cur b { width: 38px; line-height: 25px; }
.prow p.cur span { width: 36px; font-family: "Liberation Sans", sans-serif; font-size: 15px; line-height: 17px; letter-spacing: 0; color: #1a2f60; }

/* remote control */
.remhead { height: 17px; padding-left: 12px; background: #52aecf; color: #fff; font: bold 11px/16px "Noto Sans", sans-serif; }
.remote { height: 102px; display: flex; background: #b0b0b0; overflow: hidden; }
.jog { margin: 1px 0 0 8px; display: grid; grid-template-columns: repeat(3, 33px); grid-auto-rows: 33px; gap: 2px; flex: none; }
.jog span { display: grid; place-content: center; background: #c0dcc0; border: 2px solid #666; box-shadow: inset 1px 1px #fff, inset -1px -1px #8a8a8a; font-weight: bold; font-size: 12px; letter-spacing: -.3px; color: #505050; }
.jog svg { fill: #808080; }
.jog .uv0 { color: #00f; border-color: #f07030; }
.groove { flex: none; width: 5px; margin: 2px 0 0 6px; border-left: 1px solid #999; border-right: 1px solid #fff; }
.feed { flex: none; margin: 3px 0 0 6px; display: grid; grid-template-columns: repeat(3, 45px); grid-auto-rows: 44px; gap: 9px 5px; }
.ctl { display: flex; flex-direction: column; align-items: center; gap: 4px; width: 41px; flex: none; }
.feed .ctl { width: 45px; }
.k { position: relative; }
span.k { width: 100%; height: 33px; flex: none; display: flex; flex-direction: column; align-items: center; justify-content: center; background: #f0f0f0; border: 1px solid #50504c; box-shadow: inset 1px 1px #888, inset 3px 3px #fff, inset -2px -2px #999; font: bold 11px/12px "Noto Sans", sans-serif; color: #50504c; }
span.k.big { font: bold 13px "Liberation Sans", sans-serif; letter-spacing: -.1px; }
span.k.sky { background: #a6caf0; font-size: 12.5px; letter-spacing: -.7px; }
.zcol { flex: none; width: 33px; margin: 6px 0 0 9px; display: flex; flex-direction: column; gap: 29px; }
span.k.mint { background: #c0dcc0; }
.g2 { margin-left: 5px; }
.returns { flex: none; width: 177px; margin: 3px 0 0 5px; display: flex; flex-direction: column; gap: 9px; }
.rrow { display: flex; }
.ctl.w50 { width: 50px; margin-right: 9px; }
.ctl.w55 { width: 55px; }
.ctl.w45 { width: 45px; }
.ctl.w53 { width: 53px; }
.ctl.w59 { width: 59px; }
.ctl.w65 { width: 65px; }
.ml7 { margin-left: 7px; }
.ml1 { margin-left: 1px; }
span.k.tx { display: block; padding: 5px 0 0 7px; font: bold 12px/12px "Noto Sans", sans-serif; letter-spacing: -.2px; }
.w55 span.k.tx { padding-left: 11px; }
.w55 span.k.lbs { padding-left: 4px; letter-spacing: -.2px; }
.bl { color: #0000d0; }
.gr { color: #205838; }
.rd { color: #b01818; }
.warn { position: absolute; left: 30px; top: 16px; }
.h2 .ban { left: 11px; }
.g3 { margin-left: 2px; }
.ops { margin: 3px 0 0 0; flex: none; }
.orow1, .orow3 { display: flex; height: 54px; }
.orow1 { padding-left: 4px; }
.orow3 { position: relative; padding-left: 6px; }
.minis { width: 8px; padding-top: 12px; display: flex; flex-direction: column; gap: 3px; }
.minis i { height: 7px; border: 1px solid #000; border-right: 0; }
.minis i.on { background: #0f0; }
.minis.m2 { margin-left: 6px; padding-top: 23px; gap: 4px; }
.orow1 > .ctl:nth-child(2) { width: 40px; }
.dbadge { width: 12px; height: 16px; margin: 27px 1px 0 0; background: #0d0; border: 2px solid; border-color: #fff #666 #666 #fff; font: 9px/12px "DejaVu Sans", sans-serif; text-align: center; }
.orow1 > .ctl:nth-child(n+5) { margin-left: 5px; }
.orow1 > .ctl:nth-child(5), .orow1 > .ctl:nth-child(8) { margin-left: 4px; }
.orow1 > .ctl.w59 { margin-left: 13px; }
.ic { width: 39px; height: 29px; }
.teal span.k { border-color: #408080; }
span.k.ion { font-size: 12px; }
span.k.krb { background: #cfcfdb; color: #000; font: bold 13px "Noto Sans CJK KR", sans-serif; }
span.k.krb.tan { background: #cab798; }
.readybox { width: 77px; height: 46px; margin: 5px 0 0 12px; padding: 5px; background: #ff0; border: 1px solid #000; }
span.k.go, span.k.stop, span.k.start { font: bold 12.5px "Noto Sans", sans-serif; letter-spacing: -.4px; background: #008000; color: #fff; }
span.k.stop { background: #f00; border-color: #800000; }
span.k.start { background: #3399ff; border-color: #104020; font-size: 12px; }
span.k.reset { background: #ff8000; color: #201000; font-size: 12.5px; letter-spacing: -.3px; }
.sbadge { position: absolute; left: 0; top: -4px; width: 18px; height: 15px; background: #f4f4f4; border: 1px solid; border-color: #fff #444 #444 #fff; border-width: 1px 2px 2px 1px; font: bold 10px/12px "DejaVu Sans", sans-serif; text-align: center; z-index: 1; }
.sp { margin-left: 14px; }
.lt { margin-left: 5px; }
.lt span.k { background: #9898ff; }
.st { margin-left: 9px; }
.sp2 { margin-left: 5px; }
.orow3 .w59 { margin-left: 13px; }
.w65 { margin-left: 19px; }

.status { position: relative; height: 30px; padding: 5px 0 0 6px; display: flex; gap: 2.2px; background: #808080; }
.status span { flex: none; width: 80px; height: 21px; background: #000; color: #909090; font: bold 13px/19px "Liberation Sans", "Noto Sans CJK KR", sans-serif; text-align: center; letter-spacing: .8px; }
.status .on { background: #0f0; color: #062806; }
.status .yl { background: #ff0; color: #222; }
.status .last { text-align: left; padding-left: 7px; letter-spacing: 1.5px; }
.status .rd { background: #f00; color: #300; }
.lamp { width: 15px; height: 15px; margin: 3px 1.8px 0 0; border-radius: 50%; background: #008000; border: 1px solid #000; }
.logmes { position: absolute; left: 972px; top: 739px; width: 60px; height: 28px; padding-left: 7px; border: 1px solid #506070; background: linear-gradient(#dce6ee, #c8d6e2); color: #5c6468; font: 12px/32px "Noto Sans", sans-serif; }
```
